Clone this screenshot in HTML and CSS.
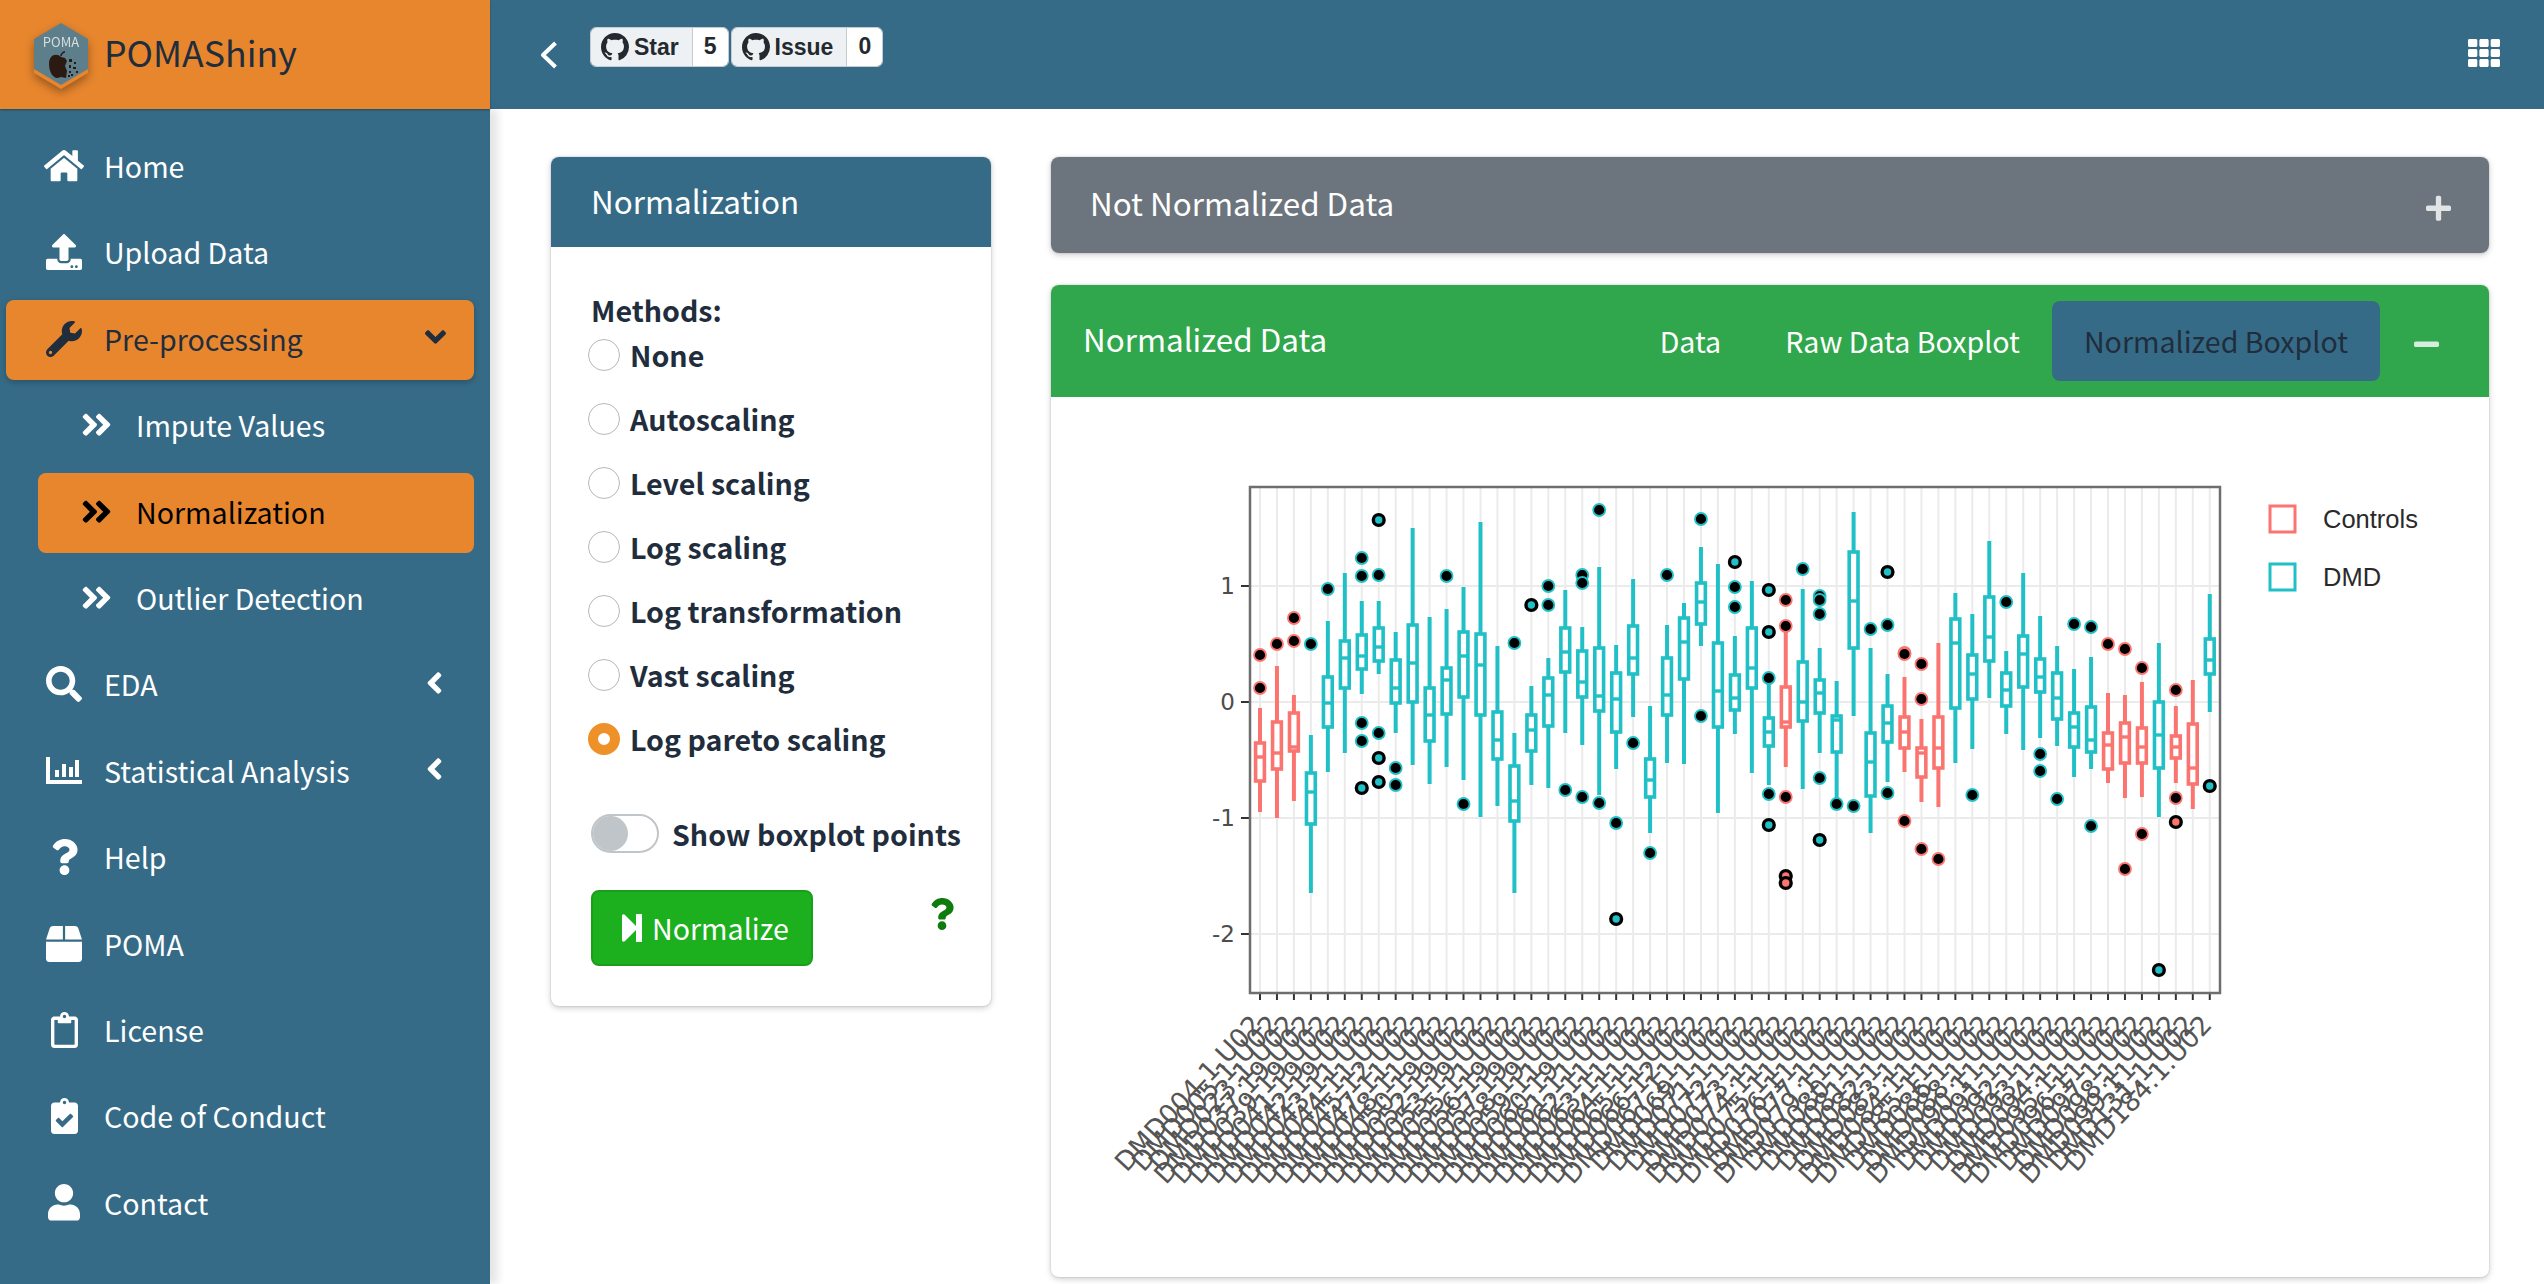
FILE: index.html
```html
<!DOCTYPE html>
<html lang="en">
<head>
    <meta charset="UTF-8">
    <meta name="viewport" content="width=device-width, initial-scale=1.0">
    <title>POMAShiny</title>
    <link rel="stylesheet" href="styles.css">
</head>
<body>

<div class="wrapper">

    <!-- Brand -->
    <a class="brand">
        <svg class="brand-logo" viewBox="0 0 56 66">
            <path d="M28 3 L55 19 V50 L28 66 L1 50 V19 Z" fill="#e8862e"/>
            <path d="M28 0 L55 16 V46 L28 62 L1 46 V16 Z" fill="#5d7f8b"/>
            <text x="28" y="24" text-anchor="middle" class="brand-logo-text">POMA</text>
            <path d="M28 34 C24 30 16 31 16 41 C16 50 21 55 24 55 C26 55 27 54 28 54 C30 54 31 55 33 55 L34 48 L32 43 L34 38 L32 35 Z" fill="#2b1a12"/>
            <path d="M28 33 C28 31 30 29 32 29" stroke="#2b1a12" stroke-width="1.5" fill="none"/>
            <path d="M36 36h3v3h-3zM41 39h2v2h-2zM36 42h2v3h-2zM40 44h3v2h-3zM36 48h2v2h-2zM38 51h2v2h-2zM43 48h2v2h-2zM35 52h2v2h-2z" fill="#2b1a12"/>
        </svg>
        <span class="brand-text">POMAShiny</span>
    </a>

    <!-- Top bar -->
    <header class="topbar">
        <svg class="topbar-back" viewBox="0 0 18 28"><polyline points="15.5,2 3,14 15.5,26" fill="none" stroke="#fff" stroke-width="4" stroke-linejoin="round"/></svg>
        <div class="badges">
            <div class="badge">
                <span class="badge-label"><svg viewBox="0 0 16 16"><path d="M8 0C3.58 0 0 3.58 0 8c0 3.54 2.29 6.53 5.47 7.59.4.07.55-.17.55-.38 0-.19-.01-.82-.01-1.49-2.01.37-2.53-.49-2.69-.94-.09-.23-.48-.94-.82-1.13-.28-.15-.68-.52-.01-.53.63-.01 1.08.58 1.23.82.72 1.21 1.87.87 2.33.66.07-.52.28-.87.51-1.07-1.78-.2-3.64-.89-3.64-3.95 0-.87.31-1.59.82-2.15-.08-.2-.36-1.02.08-2.12 0 0 .67-.21 2.2.82.64-.18 1.32-.27 2-.27.68 0 1.36.09 2 .27 1.53-1.04 2.2-.82 2.2-.82.44 1.1.16 1.92.08 2.12.51.56.82 1.27.82 2.15 0 3.07-1.87 3.75-3.65 3.95.29.25.54.73.54 1.48 0 1.07-.01 1.93-.01 2.2 0 .21.15.46.55.38A8.013 8.013 0 0016 8c0-4.42-3.58-8-8-8z"/></svg>Star</span>
                <span class="badge-count">5</span>
            </div>
            <div class="badge">
                <span class="badge-label"><svg viewBox="0 0 16 16"><path d="M8 0C3.58 0 0 3.58 0 8c0 3.54 2.29 6.53 5.47 7.59.4.07.55-.17.55-.38 0-.19-.01-.82-.01-1.49-2.01.37-2.53-.49-2.69-.94-.09-.23-.48-.94-.82-1.13-.28-.15-.68-.52-.01-.53.63-.01 1.08.58 1.23.82.72 1.21 1.87.87 2.33.66.07-.52.28-.87.51-1.07-1.78-.2-3.64-.89-3.64-3.95 0-.87.31-1.59.82-2.15-.08-.2-.36-1.02.08-2.12 0 0 .67-.21 2.2.82.64-.18 1.32-.27 2-.27.68 0 1.36.09 2 .27 1.53-1.04 2.2-.82 2.2-.82.44 1.1.16 1.92.08 2.12.51.56.82 1.27.82 2.15 0 3.07-1.87 3.75-3.65 3.95.29.25.54.73.54 1.48 0 1.07-.01 1.93-.01 2.2 0 .21.15.46.55.38A8.013 8.013 0 0016 8c0-4.42-3.58-8-8-8z"/></svg>Issue</span>
                <span class="badge-count">0</span>
            </div>
        </div>
        <svg class="topbar-grid" viewBox="0 32 512 448"><path fill="#fff" d="M149.333 56v80c0 13.255-10.745 24-24 24H24c-13.255 0-24-10.745-24-24V56c0-13.255 10.745-24 24-24h101.333c13.255 0 24 10.745 24 24zm181.334 240v-80c0-13.255-10.745-24-24-24H205.333c-13.255 0-24 10.745-24 24v80c0 13.255 10.745 24 24 24h101.333c13.256 0 24.001-10.745 24.001-24zm32-240v80c0 13.255 10.745 24 24 24H488c13.255 0 24-10.745 24-24V56c0-13.255-10.745-24-24-24H386.667c-13.255 0-24 10.745-24 24zm-32 80V56c0-13.255-10.745-24-24-24H205.333c-13.255 0-24 10.745-24 24v80c0 13.255 10.745 24 24 24h101.333c13.256 0 24.001-10.745 24.001-24zm-205.334 56H24c-13.255 0-24 10.745-24 24v80c0 13.255 10.745 24 24 24h101.333c13.255 0 24-10.745 24-24v-80c0-13.255-10.745-24-24-24zM0 376v80c0 13.255 10.745 24 24 24h101.333c13.255 0 24-10.745 24-24v-80c0-13.255-10.745-24-24-24H24c-13.255 0-24 10.745-24 24zm386.667-56H488c13.255 0 24-10.745 24-24v-80c0-13.255-10.745-24-24-24H386.667c-13.255 0-24 10.745-24 24v80c0 13.255 10.745 24 24 24zm0 160H488c13.255 0 24-10.745 24-24v-80c0-13.255-10.745-24-24-24H386.667c-13.255 0-24 10.745-24 24v80c0 13.255 10.745 24 24 24zM181.333 376v80c0 13.255 10.745 24 24 24h101.333c13.255 0 24-10.745 24-24v-80c0-13.255-10.745-24-24-24H205.333c-13.255 0-24 10.745-24 24z"/></svg>
    </header>

    <!-- Sidebar -->
    <nav class="sidebar">
        <a class="nav-link">
            <span class="nav-icon"><svg viewBox="0 0 576 512" width="40"><path d="M280.37 148.26L96 300.11V464a16 16 0 0 0 16 16l112.06-.29a16 16 0 0 0 15.92-16V368a16 16 0 0 1 16-16h64a16 16 0 0 1 16 16v95.64a16 16 0 0 0 16 16.05L464 480a16 16 0 0 0 16-16V300L295.67 148.26a12.19 12.19 0 0 0-15.3 0zM571.6 251.47L488 182.56V44.05a12 12 0 0 0-12-12h-56a12 12 0 0 0-12 12v72.61L318.47 43a48 48 0 0 0-61 0L4.34 251.47a12 12 0 0 0-1.6 16.9l25.5 31A12 12 0 0 0 45.15 301l235.22-193.74a12.19 12.19 0 0 1 15.3 0L530.9 301a12 12 0 0 0 16.9-1.6l25.5-31a12 12 0 0 0-1.7-16.93z"/></svg></span>
            Home
        </a>
        <a class="nav-link">
            <span class="nav-icon"><svg viewBox="0 0 512 512" width="36"><path d="M296 384h-80c-13.3 0-24-10.7-24-24V192h-87.7c-17.8 0-26.7-21.5-14.1-34.1L242.3 5.7c7.5-7.5 19.8-7.5 27.3 0l152.2 152.2c12.6 12.6 3.7 34.1-14.1 34.1H320v168c0 13.3-10.7 24-24 24zm216-8v112c0 13.3-10.7 24-24 24H24c-13.3 0-24-10.7-24-24V376c0-13.3 10.7-24 24-24h136v8c0 30.9 25.1 56 56 56h80c30.9 0 56-25.1 56-56v-8h136c13.3 0 24 10.7 24 24zm-124 88c0-11-9-20-20-20s-20 9-20 20 9 20 20 20 20-9 20-20zm64 0c0-11-9-20-20-20s-20 9-20 20 9 20 20 20 20-9 20-20z"/></svg></span>
            Upload Data
        </a>
        <a class="nav-link nav-open">
            <span class="nav-icon"><svg viewBox="0 0 512 512" width="36"><path d="M507.73 109.1c-2.24-9.03-13.54-12.09-20.12-5.51l-74.36 74.36-67.88-11.31-11.31-67.88 74.36-74.36c6.62-6.62 3.43-17.9-5.66-20.16-47.38-11.74-99.55.91-136.58 37.93-39.64 39.64-50.55 97.1-34.05 147.2L18.74 402.76c-24.99 24.99-24.99 65.51 0 90.5 24.99 24.99 65.51 24.99 90.5 0l213.21-213.21c50.12 16.71 107.47 5.68 147.37-34.22 37.07-37.07 49.7-89.32 37.91-136.73zM64 472c-13.25 0-24-10.75-24-24 0-13.26 10.75-24 24-24s24 10.74 24 24c0 13.25-10.75 24-24 24z"/></svg></span>
            Pre-processing
            <svg class="nav-arrow" viewBox="0 0 320 512" width="21"><path d="M143 352.3L7 216.3c-9.4-9.4-9.4-24.6 0-33.9l22.6-22.6c9.4-9.4 24.6-9.4 33.9 0l96.4 96.4 96.4-96.4c9.4-9.4 24.6-9.4 33.9 0l22.6 22.6c9.4 9.4 9.4 24.6 0 33.9l-136 136c-9.2 9.4-24.4 9.4-33.8 0z"/></svg>
        </a>
        <a class="nav-link nav-sub">
            <span class="nav-icon"><svg viewBox="0 0 448 512" width="31"><path d="M224.3 273l-136 136c-9.4 9.4-24.6 9.4-33.9 0l-22.6-22.6c-9.4-9.4-9.4-24.6 0-33.9l96.4-96.4-96.4-96.4c-9.4-9.4-9.4-24.6 0-33.9L54.3 103c9.4-9.4 24.6-9.4 33.9 0l136 136c9.5 9.4 9.5 24.6.1 34zm192-34l-136-136c-9.4-9.4-24.6-9.4-33.9 0l-22.6 22.6c-9.4 9.4-9.4 24.6 0 33.9l96.4 96.4-96.4 96.4c-9.4 9.4-9.4 24.6 0 33.9l22.6 22.6c9.4 9.4 24.6 9.4 33.9 0l136-136c9.4-9.2 9.4-24.4 0-33.8z"/></svg></span>
            Impute Values
        </a>
        <a class="nav-link nav-sub nav-current">
            <span class="nav-icon"><svg viewBox="0 0 448 512" width="31"><path d="M224.3 273l-136 136c-9.4 9.4-24.6 9.4-33.9 0l-22.6-22.6c-9.4-9.4-9.4-24.6 0-33.9l96.4-96.4-96.4-96.4c-9.4-9.4-9.4-24.6 0-33.9L54.3 103c9.4-9.4 24.6-9.4 33.9 0l136 136c9.5 9.4 9.5 24.6.1 34zm192-34l-136-136c-9.4-9.4-24.6-9.4-33.9 0l-22.6 22.6c-9.4 9.4-9.4 24.6 0 33.9l96.4 96.4-96.4 96.4c-9.4 9.4-9.4 24.6 0 33.9l22.6 22.6c9.4 9.4 24.6 9.4 33.9 0l136-136c9.4-9.2 9.4-24.4 0-33.8z"/></svg></span>
            Normalization
        </a>
        <a class="nav-link nav-sub">
            <span class="nav-icon"><svg viewBox="0 0 448 512" width="31"><path d="M224.3 273l-136 136c-9.4 9.4-24.6 9.4-33.9 0l-22.6-22.6c-9.4-9.4-9.4-24.6 0-33.9l96.4-96.4-96.4-96.4c-9.4-9.4-9.4-24.6 0-33.9L54.3 103c9.4-9.4 24.6-9.4 33.9 0l136 136c9.5 9.4 9.5 24.6.1 34zm192-34l-136-136c-9.4-9.4-24.6-9.4-33.9 0l-22.6 22.6c-9.4 9.4-9.4 24.6 0 33.9l96.4 96.4-96.4 96.4c-9.4 9.4-9.4 24.6 0 33.9l22.6 22.6c9.4 9.4 24.6 9.4 33.9 0l136-136c9.4-9.2 9.4-24.4 0-33.8z"/></svg></span>
            Outlier Detection
        </a>
        <a class="nav-link">
            <span class="nav-icon"><svg viewBox="0 0 512 512" width="36"><path d="M505 442.7L405.3 343c-4.5-4.5-10.6-7-17-7H372c27.6-35.3 44-79.7 44-128C416 93.1 322.9 0 208 0S0 93.1 0 208s93.1 208 208 208c48.3 0 92.7-16.4 128-44v16.3c0 6.4 2.5 12.5 7 17l99.7 99.7c9.4 9.4 24.6 9.4 33.9 0l28.3-28.3c9.4-9.4 9.4-24.6.1-34zM208 336c-70.7 0-128-57.2-128-128 0-70.7 57.2-128 128-128 70.7 0 128 57.2 128 128 0 70.7-57.2 128-128 128z"/></svg></span>
            EDA
            <svg class="nav-arrow" viewBox="0 0 256 512" width="17"><path d="M31.7 239l136-136c9.4-9.4 24.6-9.4 33.9 0l22.6 22.6c9.4 9.4 9.4 24.6 0 33.9L127.9 256l96.4 96.4c9.4 9.4 9.4 24.6 0 33.9L201.7 409c-9.4 9.4-24.6 9.4-33.9 0l-136-136c-9.5-9.4-9.5-24.6-.1-34z"/></svg>
        </a>
        <a class="nav-link">
            <span class="nav-icon"><svg viewBox="0 0 36 27" width="36"><path d="M0 0h4v23h32v4H0z"/><path d="M9 13h4v7H9zM16 7h4v13h-4zM23 10h4v10h-4zM29 3h4v17h-4z"/></svg></span>
            Statistical Analysis
            <svg class="nav-arrow" viewBox="0 0 256 512" width="17"><path d="M31.7 239l136-136c9.4-9.4 24.6-9.4 33.9 0l22.6 22.6c9.4 9.4 9.4 24.6 0 33.9L127.9 256l96.4 96.4c9.4 9.4 9.4 24.6 0 33.9L201.7 409c-9.4 9.4-24.6 9.4-33.9 0l-136-136c-9.5-9.4-9.5-24.6-.1-34z"/></svg>
        </a>
        <a class="nav-link">
            <span class="nav-icon"><svg viewBox="0 0 384 512" width="27"><path d="M202.021 0C122.202 0 70.503 32.703 29.914 91.026c-7.363 10.58-5.093 25.086 5.178 32.874l43.138 32.709c10.373 7.865 25.132 6.026 33.253-4.148 25.049-31.381 43.63-49.449 82.757-49.449 30.764 0 68.816 19.799 68.816 49.631 0 22.552-18.617 34.134-48.993 51.164-35.423 19.86-82.299 44.576-82.299 106.405V320c0 13.255 10.745 24 24 24h72.471c13.255 0 24-10.745 24-24v-5.773c0-42.86 125.268-44.645 125.268-160.627C377.504 66.256 286.902 0 202.021 0zM192 373.459c-38.196 0-69.271 31.075-69.271 69.271 0 38.195 31.075 69.27 69.271 69.27s69.271-31.075 69.271-69.271-31.075-69.27-69.271-69.27z"/></svg></span>
            Help
        </a>
        <a class="nav-link">
            <span class="nav-icon"><svg viewBox="0 0 512 512" width="36"><path d="M509.5 184.6L458.9 32.8C452.4 13.2 434.1 0 413.4 0H272v192h238.7c-.4-2.5-.4-5-1.2-7.4zM240 0H98.6c-20.7 0-39 13.2-45.5 32.8L2.5 184.6c-.8 2.4-.8 4.9-1.2 7.4H240V0zM0 224v240c0 26.5 21.5 48 48 48h416c26.5 0 48-21.5 48-48V224H0z"/></svg></span>
            POMA
        </a>
        <a class="nav-link">
            <span class="nav-icon"><svg viewBox="0 0 384 512" width="27"><path d="M336 64h-80c0-35.3-28.7-64-64-64s-64 28.7-64 64H48C21.5 64 0 85.5 0 112v352c0 26.5 21.5 48 48 48h288c26.5 0 48-21.5 48-48V112c0-26.5-21.5-48-48-48zM192 40c13.3 0 24 10.7 24 24s-10.7 24-24 24-24-10.7-24-24 10.7-24 24-24zm144 418c0 3.3-2.7 6-6 6H54c-3.3 0-6-2.7-6-6V118c0-3.3 2.7-6 6-6h42v36c0 6.6 5.4 12 12 12h168c6.6 0 12-5.4 12-12v-36h42c3.3 0 6 2.7 6 6z"/></svg></span>
            License
        </a>
        <a class="nav-link">
            <span class="nav-icon"><svg viewBox="0 0 384 512" width="27"><path d="M336 64h-80c0-35.3-28.7-64-64-64s-64 28.7-64 64H48C21.5 64 0 85.5 0 112v352c0 26.5 21.5 48 48 48h288c26.5 0 48-21.5 48-48V112c0-26.5-21.5-48-48-48zM192 40c13.3 0 24 10.7 24 24s-10.7 24-24 24-24-10.7-24-24 10.7-24 24-24zm121.2 231.8l-143 141.8c-4.7 4.7-12.3 4.6-17-.1l-82.6-83.3c-4.7-4.7-4.6-12.3.1-17L99.1 285c4.7-4.7 12.3-4.6 17 .1l46 46.4 106-105.2c4.7-4.7 12.3-4.6 17 .1l28.2 28.4c4.7 4.8 4.6 12.3-.1 17z"/></svg></span>
            Code of Conduct
        </a>
        <a class="nav-link">
            <span class="nav-icon"><svg viewBox="0 0 448 512" width="32"><path d="M224 256c70.7 0 128-57.3 128-128S294.7 0 224 0 96 57.3 96 128s57.3 128 128 128zm89.6 32h-16.7c-22.2 10.2-46.9 16-72.9 16s-50.6-5.8-72.9-16h-16.7C60.2 288 0 348.2 0 422.4V464c0 26.5 21.5 48 48 48h352c26.5 0 48-21.5 48-48v-41.6c0-74.2-60.2-134.4-134.4-134.4z"/></svg></span>
            Contact
        </a>
    </nav>

    <!-- Content -->
    <main class="content">

        <section class="card card-methods">
            <div class="card-header header-blue">Normalization</div>
            <form class="card-body">
                <div class="methods-title">Methods:</div>
                <label class="radio-row"><input type="radio" name="method"> None</label>
                <label class="radio-row"><input type="radio" name="method"> Autoscaling</label>
                <label class="radio-row"><input type="radio" name="method"> Level scaling</label>
                <label class="radio-row"><input type="radio" name="method"> Log scaling</label>
                <label class="radio-row"><input type="radio" name="method"> Log transformation</label>
                <label class="radio-row"><input type="radio" name="method"> Vast scaling</label>
                <label class="radio-row"><input type="radio" name="method" checked> Log pareto scaling</label>

                <div class="switch-row">
                    <span class="switch"><span class="switch-knob"></span></span>
                    Show boxplot points
                </div>

                <div class="action-row">
                    <button type="button" class="btn-normalize">
                        <svg viewBox="0 0 20 28" width="20" height="28"><path d="M0 2 C0 0 2 0 3 1 L14 12 V1 C14 0 14 0 15 0 H19 C20 0 20 0 20 1 V27 C20 28 20 28 19 28 H15 C14 28 14 28 14 27 V16 L3 27 C2 28 0 28 0 26 Z" fill="#fff"/></svg>
                        Normalize
                    </button>
                    <svg class="help-mark" viewBox="0 0 384 512" width="24" height="32"><path d="M202.021 0C122.202 0 70.503 32.703 29.914 91.026c-7.363 10.58-5.093 25.086 5.178 32.874l43.138 32.709c10.373 7.865 25.132 6.026 33.253-4.148 25.049-31.381 43.63-49.449 82.757-49.449 30.764 0 68.816 19.799 68.816 49.631 0 22.552-18.617 34.134-48.993 51.164-35.423 19.86-82.299 44.576-82.299 106.405V320c0 13.255 10.745 24 24 24h72.471c13.255 0 24-10.745 24-24v-5.773c0-42.86 125.268-44.645 125.268-160.627C377.504 66.256 286.902 0 202.021 0zM192 373.459c-38.196 0-69.271 31.075-69.271 69.271 0 38.195 31.075 69.27 69.271 69.27s69.271-31.075 69.271-69.271-31.075-69.27-69.271-69.27z"/></svg>
                </div>
            </form>
        </section>

        <div class="results">
            <section class="card card-collapsed">
                <div class="card-header header-grey">
                    <span class="card-title">Not Normalized Data</span>
                    <svg class="card-tool" viewBox="0 0 448 512" width="25"><path d="M416 208H272V64c0-17.67-14.33-32-32-32h-32c-17.67 0-32 14.33-32 32v144H32c-17.67 0-32 14.33-32 32v32c0 17.67 14.33 32 32 32h144v144c0 17.67 14.33 32 32 32h32c17.67 0 32-14.33 32-32V304h144c17.67 0 32-14.33 32-32v-32c0-17.67-14.33-32-32-32z"/></svg>
                </div>
            </section>

            <section class="card card-plot">
                <div class="card-header header-green">
                    <span class="card-title">Normalized Data</span>
                    <ul class="tabs">
                        <li class="tab">Data</li>
                        <li class="tab">Raw Data Boxplot</li>
                        <li class="tab tab-active">Normalized Boxplot</li>
                    </ul>
                    <svg class="card-tool" viewBox="0 0 448 512" width="25"><path d="M416 208H32c-17.67 0-32 14.33-32 32v32c0 17.67 14.33 32 32 32h384c17.67 0 32-14.33 32-32v-32c0-17.67-14.33-32-32-32z"/></svg>
                </div>
                <!-- viewBox uses page coordinates, see plot.js -->
                <svg id="boxplot" viewBox="1051 397 1438 880"></svg>
            </section>
        </div>

    </main>
</div>

<script src="plot.js"></script>
</body>
</html>
```

FILE: styles.css
```css
* {
    box-sizing: border-box;
}

body {
    margin: 0;
    background-color: white;
    color: #1f2d3d;
    font-family: "Noto Sans CJK SC", "Noto Sans", sans-serif;
    font-size: 28.6px;
    line-height: 48px;
    overflow: hidden;
}

.wrapper {
    display: grid;
    grid-template-columns: 490px 1fr;
    grid-template-rows: 109px 1175px;
    height: 1284px;
}

/* Brand */
.brand {
    display: flex;
    align-items: center;
    padding-left: 33px;
    background-color: #e8862e;
    box-shadow: 0 1px 2px rgba(0, 0, 0, 0.35);
    position: relative;
    z-index: 2;
}
.brand-logo {
    width: 56px;
    height: 66px;
    margin-top: 2px;
    filter: drop-shadow(0 4px 5px rgba(0, 0, 0, 0.35));
}
.brand-logo-text {
    font-size: 13px;
    fill: #d9dedd;
}
.brand-text {
    margin-left: 15px;
    margin-top: -6px;
    font-size: 35.7px;
    line-height: 60px;
}

/* Top bar */
.topbar {
    display: flex;
    align-items: center;
    padding-left: 50px;
    padding-right: 44px;
    background-color: #366b87;
}
.topbar-back {
    width: 18px;
    height: 28px;
}
.badges {
    display: flex;
    gap: 2px;
    margin-left: 32px;
    margin-top: -15px;
}
.badge {
    display: flex;
    height: 40px;
    border: 1.5px solid #c5ccd2;
    border-radius: 6px;
    overflow: hidden;
    color: #24292f;
    font-family: "Liberation Sans", Arial, sans-serif;
    font-size: 23px;
    font-weight: bold;
    line-height: 37px;
}
.badge-label {
    display: flex;
    align-items: center;
    gap: 5px;
    padding: 0 13px 0 10px;
    background-color: #eef1f4;
    border-right: 1.5px solid #c5ccd2;
}
.badge-label svg {
    width: 28px;
    height: 28px;
    fill: #24292f;
}
.badge-count {
    padding: 0 11px;
    background-color: white;
}
.topbar-grid {
    width: 32px;
    height: 28px;
    margin-left: auto;
    margin-top: -3px;
}

/* Sidebar */
.sidebar {
    display: flex;
    flex-direction: column;
    gap: 6.4px;
    padding: 18px 16px 0 6px;
    background-color: #366b87;
    box-shadow: 8px 0 8px rgba(0, 0, 0, 0.1);
    position: relative;
    z-index: 1;
}
.nav-link {
    display: flex;
    align-items: center;
    height: 80px;
    flex: none;
    padding-left: 98px;
    padding-right: 31px;
    padding-bottom: 2px;
    border-radius: 8px;
    color: white;
    fill: white;
    position: relative;
}
.nav-icon {
    display: flex;
    justify-content: center;
    align-items: center;
    width: 44px;
    position: absolute;
    left: 36px;
    top: 0;
    height: 78px;
}
.nav-arrow {
    margin-left: auto;
    margin-top: -3px;
    height: 34px;
}
.nav-sub {
    margin-left: 32px;
}
.nav-open {
    background-color: #e8862e;
    color: #1f2d3d;
    fill: #1f2d3d;
    box-shadow: 0 2px 6px rgba(0, 0, 0, 0.25);
    padding-right: 28px;
}
.nav-current {
    background-color: #e8862e;
    color: black;
    fill: black;
}

/* Content */
.content {
    display: flex;
    align-items: flex-start;
    gap: 60px;
    padding: 48px 55px 0 61px;
}
.card {
    background-color: white;
    border-radius: 8px;
    box-shadow: 0 0 2px rgba(0, 0, 0, 0.2), 0 2px 6px rgba(0, 0, 0, 0.2);
    overflow: hidden;
}
.card-header {
    display: flex;
    align-items: center;
    color: white;
    font-size: 31.4px;
}
.card-title {
    margin-top: -4px;
}
.card-tool {
    margin-left: auto;
    fill: rgba(255, 255, 255, 0.8);
}
.header-blue {
    height: 90px;
    padding-left: 40px;
    padding-bottom: 3px;
    background-color: #366b87;
}
.header-grey {
    height: 96px;
    padding: 0 38px 0 39px;
    background-color: #6c757d;
}
.header-grey .card-tool {
    margin-top: 6px;
}
.header-green {
    height: 112px;
    padding: 0 50px 0 32px;
    background-color: #30a74c;
}
.header-green .card-title {
    margin-top: -5px;
}
.header-green .card-tool {
    margin-top: 6px;
    margin-left: 34px;
}

/* Method form */
.card-methods {
    flex: none;
    width: 440px;
}
.card-methods .card-body {
    padding: 39px 37px 40px 40px;
    font-weight: bold;
}
.methods-title {
    margin-bottom: -3px;
}
.radio-row {
    display: flex;
    align-items: center;
    gap: 10px;
    margin-left: -3px;
    margin-bottom: 16px;
    height: 48px;
}
.radio-row input {
    appearance: none;
    flex: none;
    width: 32px;
    height: 32px;
    margin: 0;
    border: 1.5px solid #b9b9b9;
    border-radius: 50%;
    background-color: white;
}
.radio-row input:checked {
    border: 10.5px solid #ee9129;
}
.switch-row {
    display: flex;
    align-items: center;
    gap: 13px;
    height: 48px;
    margin-top: 47px;
    white-space: nowrap;
}
.switch {
    flex: none;
    display: block;
    width: 68px;
    height: 39px;
    margin-top: -2px;
    border: 2px solid #bfc5c9;
    border-radius: 20px;
    background-color: white;
}
.switch-knob {
    display: block;
    width: 35px;
    height: 35px;
    border-radius: 50%;
    background-color: #bfc5c9;
}
.action-row {
    display: flex;
    justify-content: space-between;
    align-items: flex-start;
    margin-top: 32px;
}
.btn-normalize {
    display: flex;
    align-items: center;
    gap: 10px;
    width: 222px;
    height: 76px;
    padding: 0 0 0 29px;
    border: 2px solid #18a01b;
    border-radius: 8px;
    background-color: #1cb01f;
    color: white;
    font: inherit;
    font-weight: normal;
}
.help-mark {
    margin-top: 8px;
    fill: #0d7c0d;
}

/* Right column */
.results {
    flex: 1;
    display: flex;
    flex-direction: column;
    gap: 32px;
}
.card-plot {
    height: 992px;
}
.tabs {
    display: flex;
    align-items: center;
    margin: 0 0 0 auto;
    padding: 0;
    list-style: none;
    font-size: 28.6px;
}
.tab {
    height: 80px;
    padding: 0 32px;
    line-height: 80px;
    border-radius: 8px;
}
.tab-active {
    background-color: #366b87;
    color: #1f2d3d;
}
#boxplot {
    display: block;
    width: 1438px;
    height: 880px;
}
.grid-line {
    stroke: #ebebeb;
    stroke-width: 2;
}
.panel-border {
    fill: none;
    stroke: #6e6e6e;
    stroke-width: 2.5;
}
.tick {
    stroke: #333;
    stroke-width: 2;
}
.y-label {
    fill: #4d4d4d;
    font-family: "DejaVu Sans", Verdana, sans-serif;
    font-size: 23px;
}
.x-label {
    fill: #555;
    font-family: "DejaVu Sans", Verdana, sans-serif;
    font-size: 26.5px;
}
.legend-label {
    fill: #2a2a2a;
    font-family: "Liberation Sans", Arial, sans-serif;
    font-size: 25.5px;
}
```

FILE: plot.js
```js
// Box plot, all coordinates are page pixels (the svg viewBox is set to match)
const NS = "http://www.w3.org/2000/svg";
const COLORS = { c: "#fb7570", d: "#20c0c6" };

const panelLeft = 1250, panelRight = 2220, panelTop = 487, panelBottom = 993;
const firstX = 1260, stepX = 16.96;

// sample, group, whisker top, box top, median, box bottom, whisker bottom, outliers, ringed outliers
const samples = [
    ["DMD004.1", "c", 708, 743, 757, 781, 812, [655, 688], []],
    ["DMD005.1", "c", 666, 722, 753, 769, 818, [644], []],
    ["DMD023.1", "c", 695, 713, 747, 751, 801, [618, 641], []],
    ["DMD037.19", "d", 735, 773, 792, 824, 893, [644], []],
    ["DMD039.19", "d", 621, 677, 703, 727, 772, [589], []],
    ["DMD041.19", "d", 573, 641, 658, 688, 753, [], []],
    ["DMD042.19", "d", 601, 635, 656, 669, 694, [558, 576, 723, 741], [788]],
    ["DMD043.11", "d", 601, 628, 647, 661, 674, [575, 733], [520, 758, 782]],
    ["DMD044.11", "d", 632, 660, 688, 703, 733, [768, 785], []],
    ["DMD045.12", "d", 528, 625, 663, 702, 765, [], []],
    ["DMD047.11", "d", 617, 688, 715, 741, 784, [], []],
    ["DMD048.11", "d", 609, 668, 680, 714, 767, [576], []],
    ["DMD050.19", "d", 587, 632, 656, 697, 780, [804], []],
    ["DMD052.19", "d", 522, 634, 665, 715, 817, [], []],
    ["DMD053.19", "d", 646, 712, 740, 759, 806, [], []],
    ["DMD055.11", "d", 733, 766, 801, 821, 893, [643], []],
    ["DMD056.19", "d", 686, 715, 730, 751, 785, [], [605]],
    ["DMD057.19", "d", 658, 678, 695, 726, 788, [586, 605], []],
    ["DMD058.19", "d", 590, 628, 652, 672, 733, [790], []],
    ["DMD059.11", "d", 627, 651, 682, 697, 745, [575, 583, 797], []],
    ["DMD060.19", "d", 567, 648, 696, 711, 795, [510, 803], []],
    ["DMD061.11", "d", 645, 673, 699, 732, 769, [823], [919]],
    ["DMD062.11", "d", 579, 626, 658, 674, 717, [743], []],
    ["DMD063.11", "d", 706, 759, 780, 797, 833, [853], []],
    ["DMD064.11", "d", 625, 658, 695, 715, 763, [575], []],
    ["DMD065.11", "d", 603, 618, 642, 679, 764, [], []],
    ["DMD066.12", "d", 547, 583, 602, 624, 646, [519, 716], []],
    ["DMD067.11", "d", 564, 643, 691, 727, 813, [], []],
    ["DMD069.1", "d", 636, 675, 698, 710, 734, [587, 607], [562]],
    ["DMD071.1", "d", 581, 628, 668, 688, 773, [], []],
    ["DMD072.1", "d", 678, 718, 732, 746, 785, [678, 794], [590, 632, 825]],
    ["DMD073.1", "c", 632, 687, 722, 727, 767, [600, 626, 797], [876, 883]],
    ["DMD074.11", "d", 589, 662, 702, 721, 789, [569], []],
    ["DMD075.11", "d", 648, 680, 693, 713, 753, [596, 600, 614, 778], [840]],
    ["DMD076.11", "d", 681, 716, 720, 752, 798, [804], []],
    ["DMD077.1", "d", 512, 552, 601, 648, 716, [806], []],
    ["DMD079.11", "d", 648, 733, 762, 796, 833, [629], []],
    ["DMD080.1", "d", 674, 706, 723, 742, 782, [625, 793], [572]],
    ["DMD081.1", "c", 677, 717, 732, 748, 772, [653, 654, 821], []],
    ["DMD082.1", "c", 719, 748, 753, 777, 802, [664, 699, 849], []],
    ["DMD083.1", "c", 643, 717, 748, 768, 807, [859], []],
    ["DMD084.11", "d", 593, 619, 643, 708, 763, [], []],
    ["DMD085.11", "d", 614, 655, 674, 699, 749, [795], []],
    ["DMD086.1", "d", 541, 597, 637, 661, 698, [], []],
    ["DMD088.1", "d", 651, 673, 690, 706, 734, [602], []],
    ["DMD090.11", "d", 573, 636, 654, 687, 750, [], []],
    ["DMD091.1", "d", 616, 659, 677, 692, 738, [754, 771], []],
    ["DMD092.1", "d", 646, 673, 698, 719, 746, [799], []],
    ["DMD093.1", "d", 669, 713, 727, 747, 777, [624], []],
    ["DMD094.1", "d", 657, 707, 740, 752, 769, [627, 826], []],
    ["DMD095.11", "c", 693, 733, 745, 769, 783, [644], []],
    ["DMD096.11", "c", 695, 723, 737, 763, 798, [649, 869], []],
    ["DMD097.1", "c", 682, 728, 747, 763, 797, [668, 834], []],
    ["DMD098.1", "d", 643, 702, 735, 768, 817, [], [970]],
    ["DMD099.11", "c", 706, 736, 747, 758, 783, [690, 798], [822]],
    ["DMD131.1", "c", 680, 724, 768, 784, 809, [], []],
    ["DMD184.1", "d", 594, 639, 660, 674, 712, [], [786]]
];

const svg = document.getElementById("boxplot");

function add(tag, attrs, text) {
    let el = document.createElementNS(NS, tag);
    for (let key in attrs) el.setAttribute(key, attrs[key]);
    if (text) el.textContent = text;
    svg.appendChild(el);
    return el;
}

function line(x1, y1, x2, y2, attrs) {
    return add("line", Object.assign({ x1, y1, x2, y2 }, attrs));
}

// Horizontal grid, y ticks and labels
[[1, 586], [0, 702], [-1, 818], [-2, 934]].forEach(([value, y]) => {
    line(panelLeft, y, panelRight, y, { class: "grid-line" });
    line(1241, y, panelLeft, y, { class: "tick" });
    let label = value < 0 ? "-" + Math.abs(value) : String(value);
    add("text", { x: 1235, y: y + 8, "text-anchor": "end", class: "y-label" }, label);
});

// Vertical grid, x ticks and labels
samples.forEach((s, i) => {
    let x = firstX + i * stepX;
    line(x, panelTop, x, panelBottom, { class: "grid-line" });
    line(x, panelBottom, x, panelBottom + 7, { class: "tick" });
});

samples.forEach((s, i) => {
    let x = firstX + i * stepX + 3.6;
    add("text", {
        x: x, y: 1026, "text-anchor": "end", class: "x-label",
        transform: `rotate(-47 ${x} 1026)`
    }, s[0] + ".U02");
});

// Boxes and outliers
samples.forEach((s, i) => {
    let x = firstX + i * stepX;
    let color = COLORS[s[1]];
    let [wTop, bTop, med, bBot, wBot] = s.slice(2, 7);

    line(x, wTop, x, bTop, { stroke: color, "stroke-width": 4 });
    line(x, bBot, x, wBot, { stroke: color, "stroke-width": 4 });
    add("rect", {
        x: x - 4.4, y: bTop, width: 8.8, height: bBot - bTop,
        fill: "white", stroke: color, "stroke-width": 3.6
    });
    line(x - 4.4, med, x + 4.4, med, { stroke: color, "stroke-width": 3.4 });

    s[7].forEach(y => {
        add("circle", { cx: x, cy: y, r: 6, fill: "black", stroke: color, "stroke-width": 1.8 });
    });
    s[8].forEach(y => {
        add("circle", { cx: x, cy: y, r: 5.4, fill: color, stroke: "black", "stroke-width": 3.4 });
    });
});

add("rect", { x: panelLeft, y: panelTop, width: panelRight - panelLeft, height: panelBottom - panelTop, class: "panel-border" });

// Legend
[["Controls", "c", 519], ["DMD", "d", 577]].forEach(([name, key, y]) => {
    add("rect", { x: 2270, y: y - 13, width: 25, height: 26, fill: "white", stroke: COLORS[key], "stroke-width": 3 });
    add("text", { x: 2323, y: y + 9, class: "legend-label" }, name);
});
```
